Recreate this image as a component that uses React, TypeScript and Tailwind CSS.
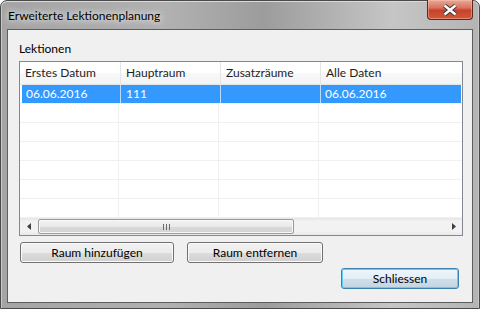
import React from 'react'

const columns = ['Erstes Datum', 'Hauptraum', 'Zusatzräume', 'Alle Daten']

const rows = [
  ['06.06.2016', '111', '', '06.06.2016'],
  ['', '', '', ''],
  ['', '', '', ''],
  ['', '', '', ''],
  ['', '', '', ''],
  ['', '', '', ''],
  ['', '', '', ''],
]

function CloseGlyph() {
  return (
    <svg width="16" height="12" viewBox="0 0 16 12">
      <path d="M2.5 1.5 L13.5 10.5 M13.5 1.5 L2.5 10.5" fill="none" stroke="#3a3a3a" strokeWidth="4.4" />
      <path d="M2.5 1.5 L13.5 10.5 M13.5 1.5 L2.5 10.5" fill="none" stroke="#ffffff" strokeWidth="2.4" />
    </svg>
  )
}

function Win7Button({ label, width, isDefault }: { label: string; width: string; isDefault?: boolean }) {
  return (
    <div
      className={
        isDefault
          ? `${width} h-[21px] rounded-[3px] border border-[#3c7fb1] shadow-[inset_0_0_0_1px_#5fd0fb] bg-[linear-gradient(#eef6fb_0%,#e3eef7_50%,#cfdfea_51%,#c4d5e2_100%)] flex items-center justify-center text-black`
          : `${width} h-[21px] rounded-[3px] border border-[#707070] shadow-[inset_0_0_0_1px_#fbfbfb] bg-[linear-gradient(#f2f2f2_0%,#ebebeb_50%,#dddddd_51%,#cfcfcf_100%)] flex items-center justify-center text-black`
      }
    >
      {label}
    </div>
  )
}

export default function App() {
  return (
    <div className="w-[480px] h-[309px] font-['Lato','Noto_Sans',sans-serif] text-[12px] leading-none select-none">
      <div className="w-full h-full flex flex-col rounded-t-[7px] border border-[#4a4a4a] bg-[linear-gradient(90deg,#a4a4a4_0%,#b1b1b1_35%,#9c9c9c_55%,#c6c6c6_82%,#b4b4b4_100%)] px-[6px] pb-[5px] shadow-[inset_0_1px_0_#dadada,inset_1px_0_0_#c8c8c8,inset_-1px_0_0_#c8c8c8]">
        {/* title bar */}
        <div className="h-[28px] flex items-start justify-between shrink-0">
          <div className="pl-[1px] pt-[9px] text-[12px] text-black [text-shadow:0_0_6px_#ffffff,0_0_10px_rgba(255,255,255,0.7)]">
            Erweiterte Lektionenplanung
          </div>
          <div className="-mt-[1px] w-[46px] h-[20px] rounded-b-[4px] border border-[#5a2a20] border-t-0 bg-[linear-gradient(#e9a99a_0%,#d9745f_40%,#c6432a_55%,#d4583c_100%)] shadow-[inset_0_0_0_1px_rgba(255,200,180,0.45)] flex items-center justify-center">
            <CloseGlyph />
          </div>
        </div>

        {/* client area */}
        <div className="flex-1 border border-[#5d5d5d] bg-[#f0f0f0] flex flex-col pl-[11px] pr-[9px]">
          <div className="pt-[13px] h-[31px] text-black">Lektionen</div>

          {/* list view */}
          <div className="h-[175px] border border-[#828790] bg-white flex flex-col">
            <div className="h-[23px] flex shrink-0 bg-[linear-gradient(#ffffff_0%,#ffffff_50%,#f7f8fa_51%,#f2f3f5_100%)] border-b border-[#e5e5e5]">
              {columns.map((c, i) => (
                <div
                  key={c}
                  className={
                    i === 3
                      ? 'flex-1 flex items-center pl-[5px] text-[#1e1e1e]'
                      : i === 0
                        ? 'w-[101px] flex items-center pl-[5px] border-r border-[#e5e5e5] text-[#1e1e1e]'
                        : 'w-[100px] flex items-center pl-[5px] border-r border-[#e5e5e5] text-[#1e1e1e]'
                  }
                >
                  {c}
                </div>
              ))}
            </div>
            <div className="flex-1 flex flex-col">
              {rows.map((r, ri) => (
                <div key={ri} className="h-[19px] flex border-b border-[#f0f0f0]">
                  <div className={ri === 0 ? 'flex-1 flex ml-[2px] mr-[1px] bg-[#3399ff] text-white' : 'flex-1 flex'}>
                    {r.map((cell, ci) => (
                      <div
                        key={ci}
                        className={
                          ci === 3
                            ? 'flex-1 flex items-center pl-[4px]'
                            : ci === 0
                              ? `w-[99px] flex items-center pl-[4px] border-r ${ri === 0 ? 'border-[#b9dbff]' : 'border-[#f0f0f0]'}`
                              : `w-[100px] flex items-center pl-[5px] border-r ${ri === 0 ? 'border-[#b9dbff]' : 'border-[#f0f0f0]'}`
                        }
                      >
                        {cell}
                      </div>
                    ))}
                  </div>
                </div>
              ))}
            </div>
            {/* horizontal scrollbar */}
            <div className="h-[17px] shrink-0 flex items-center bg-[linear-gradient(#e6e6e6_0%,#f2f2f2_20%,#f2f2f2_80%,#e8e8e8_100%)]">
              <div className="w-[17px] h-full flex items-center justify-center">
                <svg width="4" height="7" viewBox="0 0 4 7">
                  <path d="M4 0 L0 3.5 L4 7 Z" fill="#404040" />
                </svg>
              </div>
              <div className="ml-[1px] w-[256px] h-[15px] rounded-[2px] border border-[#9a9a9a] shadow-[inset_0_0_0_1px_#f8f8f8] bg-[linear-gradient(#f3f3f3_0%,#e9e9e9_50%,#d9d9d9_51%,#d3d3d3_100%)] flex items-center justify-center">
                <svg width="7" height="6" viewBox="0 0 7 6">
                  <path d="M0.5 0 V6 M3.5 0 V6 M6.5 0 V6" stroke="#6a6a6a" strokeWidth="1" />
                </svg>
              </div>
              <div className="flex-1" />
              <div className="w-[17px] h-full flex items-center justify-center">
                <svg width="4" height="7" viewBox="0 0 4 7">
                  <path d="M0 0 L4 3.5 L0 7 Z" fill="#404040" />
                </svg>
              </div>
            </div>
          </div>

          {/* buttons */}
          <div className="mt-[6px] flex gap-[13px] pl-[1px]">
            <Win7Button label="Raum hinzufügen" width="w-[154px]" />
            <Win7Button label="Raum entfernen" width="w-[136px]" />
          </div>
          <div className="mt-[5px] flex justify-end pr-[4px]">
            <Win7Button label="Schliessen" width="w-[118px]" isDefault />
          </div>
        </div>
      </div>
    </div>
  )
}
